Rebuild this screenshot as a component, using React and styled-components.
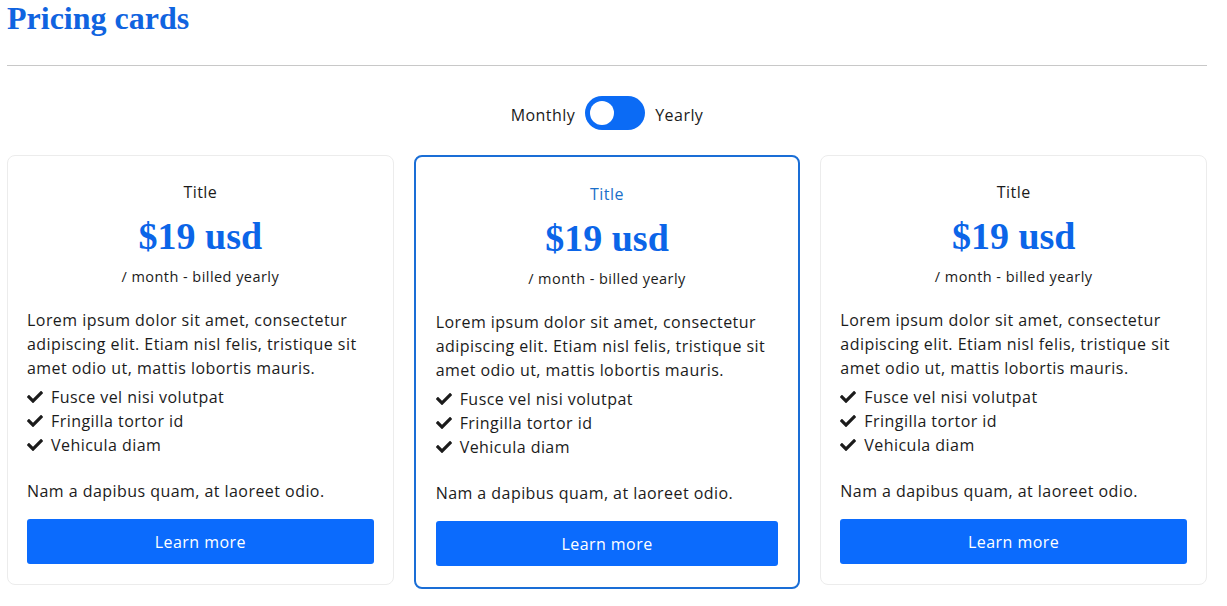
import { useState } from "react";
import styled, { createGlobalStyle } from "styled-components";
import { FaCheck } from "react-icons/fa";

const GlobalStyle = createGlobalStyle`
  body {
    margin: 0;
    background: #ffffff;
    font-family: "Open Sans", "Liberation Sans", sans-serif;
    letter-spacing: 0.45px;
    color: #1b1b1b;
  }
`;

const Page = styled.div`
  width: 1200px;
  margin-left: 7px;
`;

const Heading = styled.h1`
  margin: 0;
  font-family: "Liberation Serif", "DejaVu Serif", serif;
  font-weight: 700;
  font-size: 32px;
  line-height: 36px;
  letter-spacing: 0;
  color: #1064e0;
`;

const Divider = styled.hr`
  margin: 29px 0 0;
  border: none;
  border-top: 1px solid #c8c8c8;
`;

const ToggleRow = styled.div`
  display: flex;
  align-items: center;
  justify-content: center;
  gap: 10px;
  margin-top: 30px;
  font-size: 16px;

  span {
    padding-top: 3px;
  }
`;

const Switch = styled.button`
  position: relative;
  width: 60px;
  height: 34px;
  border: none;
  border-radius: 17px;
  background: #0b6bf5;
  padding: 0;
  cursor: pointer;

  &::after {
    content: "";
    position: absolute;
    top: 5px;
    left: ${(p) => (p.$on ? "31px" : "5px")};
    width: 24px;
    height: 24px;
    border-radius: 50%;
    background: #ffffff;
  }
`;

const Cards = styled.div`
  display: grid;
  grid-template-columns: repeat(3, 1fr);
  gap: 20px;
  align-items: start;
  margin-top: 25px;
`;

const Card = styled.div`
  border: ${(p) => (p.$featured ? "2px solid #1a6ed6" : "1px solid #ececec")};
  border-radius: 8px;
  padding: ${(p) => (p.$featured ? "25px 20px 21px" : "24px 19px 20px")};
  display: flex;
  flex-direction: column;
`;

const Title = styled.div`
  text-align: center;
  font-size: 16px;
  line-height: 24px;
  color: ${(p) => (p.$featured ? "#1a6fc9" : "#1b1b1b")};
`;

const Price = styled.div`
  margin-top: 10px;
  text-align: center;
  font-family: "Liberation Serif", "DejaVu Serif", serif;
  font-weight: 700;
  font-size: 38px;
  line-height: 44px;
  letter-spacing: 0;
  color: #0b65e8;
`;

const Period = styled.div`
  margin-top: 7px;
  text-align: center;
  font-size: 14.5px;
  line-height: 24px;
`;

const Text = styled.p`
  margin: ${(p) => p.$mt || "0"} 0 0;
  font-size: 16px;
  line-height: 24px;
`;

const Features = styled.ul`
  list-style: none;
  margin: 5px 0 0;
  padding: 0;
`;

const Feature = styled.li`
  display: flex;
  align-items: center;
  gap: 8px;
  font-size: 16px;
  line-height: 24px;

  svg {
    flex: none;
    width: 16px;
    height: 16px;
  }
`;

const Button = styled.button`
  margin-top: 16px;
  height: 45px;
  border: none;
  border-radius: 3px;
  background: #0b6bfd;
  color: #ffffff;
  font-family: inherit;
  font-size: 16px;
  letter-spacing: 0.45px;
  cursor: pointer;
`;

const plans = [
  { id: 1, featured: false },
  { id: 2, featured: true },
  { id: 3, featured: false },
];

const features = ["Fusce vel nisi volutpat", "Fringilla tortor id", "Vehicula diam"];

export default function App() {
  const [yearly, setYearly] = useState(false);

  return (
    <Page>
      <GlobalStyle />
      <Heading>Pricing cards</Heading>
      <Divider />
      <ToggleRow>
        <span>Monthly</span>
        <Switch $on={yearly} onClick={() => setYearly(!yearly)} aria-label="billing period" />
        <span>Yearly</span>
      </ToggleRow>
      <Cards>
        {plans.map((plan) => (
          <Card key={plan.id} $featured={plan.featured}>
            <Title $featured={plan.featured}>Title</Title>
            <Price>$19 usd</Price>
            <Period>/ month - billed yearly</Period>
            <Text $mt="19px">
              Lorem ipsum dolor sit amet, consectetur adipiscing elit. Etiam nisl felis, tristique sit
              amet odio ut, mattis lobortis mauris.
            </Text>
            <Features>
              {features.map((f) => (
                <Feature key={f}>
                  <FaCheck />
                  {f}
                </Feature>
              ))}
            </Features>
            <Text $mt="22px">Nam a dapibus quam, at laoreet odio.</Text>
            <Button>Learn more</Button>
          </Card>
        ))}
      </Cards>
    </Page>
  );
}
